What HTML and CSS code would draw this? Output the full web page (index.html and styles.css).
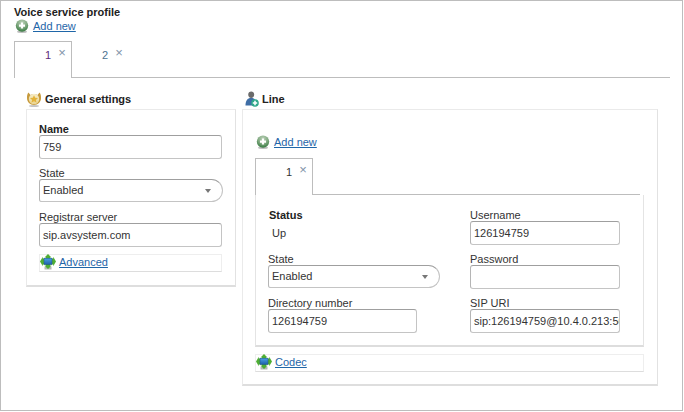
FILE: index.html
```html
<!DOCTYPE html>
<html lang="en">
<head>
<meta charset="utf-8">
<title>Voice service profile</title>
<link rel="stylesheet" href="styles.css">
</head>
<body>
<svg class="defs" width="0" height="0" aria-hidden="true">
  <defs>
    <radialGradient id="gplus" cx="50%" cy="25%" r="75%"><stop offset="0" stop-color="#b9cfb6"/><stop offset=".55" stop-color="#7fa87f"/><stop offset="1" stop-color="#34793f"/></radialGradient>
    <linearGradient id="gscreen" x1="0" y1="0" x2="0" y2="1"><stop offset="0" stop-color="#4aa3e8"/><stop offset="1" stop-color="#1f5fa8"/></linearGradient>
    <linearGradient id="gmedal" x1="0" y1="0" x2="0" y2="1"><stop offset="0" stop-color="#f7eecb"/><stop offset="1" stop-color="#e9d490"/></linearGradient>
    <symbol id="plus" viewBox="0 0 14 14">
      <ellipse cx="7" cy="12.7" rx="5" ry="1.2" fill="#bdbdbd"/>
      <circle cx="7" cy="6.6" r="6.2" fill="url(#gplus)"/>
      <path d="M7 3.6v6M4 6.6h6" stroke="#fff" stroke-width="2.2"/>
    </symbol>
    <symbol id="net" viewBox="0 0 16 16">
      <rect x="4.500" y="12.500" width="7" height="3" fill="#b4b8b4"/>
      <path d="M8 0l3.500 3.400H10v1h3.200V2.800L16 7.500l-2.800 4.700v-1.700H10v1h1.500L8 15l-3.500-3.500H6v-1H2.800v1.700L0 7.500l2.800-4.700v1.600H6v-1H4.500z" fill="#4fae34"/>
      <rect x="4" y="4.200" width="8" height="6.300" fill="url(#gscreen)" stroke="#1c5290" stroke-width=".5"/>
    </symbol>
  </defs>
</svg>
<main class="frame">
  <h1 class="title">Voice service profile</h1>
  <div class="add add-top">
    <svg class="add-icon"><use href="#plus"/></svg>
    <a href="#">Add new</a>
  </div>
  <div class="tabs tabs-top">
    <div class="tab active"><span class="num visited">1</span><span class="x">×</span></div>
    <div class="tab"><span class="num blue">2</span><span class="x">×</span></div>
  </div>
  <div class="columns">
    <section class="col-left">
      <h2 class="heading">
        <svg class="head-icon" viewBox="0 0 14 16">
          <ellipse cx="7" cy="15" rx="5" ry="1" fill="#c4c4c4"/>
          <path d="M1.400 1.500C.2 3 0 4.500 0 7c0 4 3 7 7 7s7-3 7-7c0-2.500-.2-4-1.400-5.500L10.500 4C9.500 3.300 8.300 3 7 3s-2.500.3-3.500 1z" fill="#c79a3c"/>
          <circle cx="7" cy="8" r="5.200" fill="url(#gmedal)"/>
          <path d="M7 4.200l1.200 2.500 2.800.3-2.100 1.900.6 2.700L7 10.300l-2.500 1.300.6-2.700L3 7l2.800-.3z" fill="#e3b23a"/>
        </svg>
        General settings
      </h2>
      <div class="panel panel-left">
        <div class="field"><label class="bold">Name</label><div class="input wide">759</div></div>
        <div class="field field-select"><label>State</label><div class="select wide-select">Enabled<i class="caret"></i></div></div>
        <div class="field"><label>Registrar server</label><div class="input wide">sip.avsystem.com</div></div>
        <div class="expander expander-left">
          <svg class="net"><use href="#net"/></svg><a href="#">Advanced</a>
        </div>
      </div>
    </section>
    <section class="col-right">
      <h2 class="heading heading-line">
        <svg class="head-icon" viewBox="0 0 14 16">
          <path d="M3.200 3.600C3.200 1.600 4.500.5 6.200.5s3 1.100 3 3.100-1.300 3.400-3 3.400-3-1.400-3-3.400z" fill="#6b6b6b"/>
          <path d="M.5 14.500C.5 9.500 2.500 7 6 7s5 2 5 5v2.500z" fill="#3f6ea6"/>
          <circle cx="10" cy="12" r="3.800" fill="#2fa88a"/>
          <path d="M10 9.800v4.400M7.800 12h4.400" stroke="#fff" stroke-width="1.500"/>
        </svg>
        Line
      </h2>
      <div class="panel panel-right">
        <div class="add add-line">
          <svg class="add-icon"><use href="#plus"/></svg>
          <a href="#">Add new</a>
        </div>
        <div class="tabs tabs-line">
          <div class="tab active"><span class="num">1</span><span class="x">×</span></div>
        </div>
        <div class="line-body">
          <div class="line-col">
            <div class="status"><label class="bold">Status</label><div class="status-value">Up</div></div>
            <div class="field field-select"><label>State</label><div class="select line-select">Enabled<i class="caret"></i></div></div>
            <div class="field"><label>Directory number</label><div class="input line-input">126194759</div></div>
          </div>
          <div class="line-col line-col-right">
            <div class="field"><label>Username</label><div class="input line-input">126194759</div></div>
            <div class="field"><label>Password</label><div class="input line-input"></div></div>
            <div class="field"><label>SIP URI</label><div class="input line-input clip">sip:126194759@10.4.0.213:5060</div></div>
          </div>
        </div>
        <div class="expander expander-line">
          <svg class="net"><use href="#net"/></svg><a href="#">Codec</a>
        </div>
      </div>
    </section>
  </div>
</main>
</body>
</html>
```
FILE: styles.css
```css
* { box-sizing: border-box; }
html, body { margin: 0; padding: 0; background: #fff; }
body { font: 11px/13px "Liberation Sans", Arial, sans-serif; color: #333; }
.defs { position: absolute; }
a { color: #1f66a8; text-decoration: underline; }

.frame {
  width: 683px; height: 411px;
  border: 1px solid #bdbdbd;
  padding: 5px 12px 0 13px;
  overflow: hidden;
}
.title { margin: 0; font-size: 11px; line-height: 13px; font-weight: bold; color: #222; }

.add { display: flex; align-items: center; height: 14px; font-size: 11px; }
.add a { margin-left: 4px; }
.add-icon { width: 14px; height: 14px; }
.add-top { margin-left: 1px; }

.tabs { display: flex; height: 37px; border-bottom: 1px solid #bdbdbd; }
.tabs-top { margin-top: 8px; width: 656px; }
.tab { position: relative; width: 58px; height: 37px; font-size: 11px; padding-left: 30px; padding-top: 6px; }
.tab.active { background: #fff; border: 1px solid #bdbdbd; border-bottom: 0; height: 37px; }
.tab + .tab { padding-left: 30px; padding-top: 7px; }
.num { color: #333; }
.num.visited { color: #5d2a7a; }
.num.blue { color: #4d7391; }
.x { color: #7f94a8; font-size: 13px; margin-left: 7px; position: relative; top: -2px; }

.columns { display: flex; margin-top: 10px; margin-left: 12px; }
.col-left { width: 210px; }
.col-right { width: 416px; margin-left: 6px; }
.heading { display: flex; align-items: center; height: 21px; margin: 0; padding-top: 1px; font-size: 11px; font-weight: bold; color: #222; }
.head-icon { width: 14px; height: 16px; margin: 0 4px 0 1px; flex: none; }
.heading-line { padding-left: 2px; }
.heading-line .head-icon { margin-right: 3px; }

.panel { border: 1px solid #eaeaea; border-right-color: #e2e2e2; border-bottom: 2px solid #dedede; }
.panel-left { height: 178px; padding: 12px 13px 0 12px; }
.panel-right { height: 277px; padding: 25px 13px 0 12px; }

.field { margin-bottom: 7px; }
.field-select { margin-bottom: 8px; }
.field label { display: block; height: 13px; padding-top: 1px; line-height: 13px; color: #333; }
label.bold { font-weight: bold; color: #222; }

.input, .select {
  height: 24px; line-height: 22px;
  border: 1px solid #c4c4c4; border-top-color: #9f9f9f; border-left-color: #b5b5b5;
  border-radius: 3px;
  padding: 0 3px;
  color: #333; background: #fff;
  white-space: nowrap; overflow: hidden;
}
.wide { width: 183px; }
.select { position: relative; height: 23px; line-height: 21px; border-radius: 3px 12px 12px 3px; padding-left: 3px; }
.wide-select { width: 184px; }
.line-select { width: 172px; }
.caret { position: absolute; right: 11px; top: 9px; border: 3.5px solid transparent; border-top: 4px solid #777; border-bottom: 0; width: 0; height: 0; }

.expander { display: flex; align-items: center; height: 18px; border: 1px solid #eee; border-bottom: 1px solid #ddd; padding-bottom: 2px; }
.expander-left { width: 183px; }
.expander-line { width: 389px; margin-top: 7px; }
.net { width: 16px; height: 16px; margin-right: 3px; flex: none; }

.add-line { margin-left: 1px; }
.tabs-line { margin-top: 9px; width: 385px; }

.line-body { display: flex; height: 152px; border: 1px solid #e4e4e4; border-bottom: 2px solid #ddd; border-top: 0; padding: 13px 0 0 12px; }
.line-col { width: 202px; flex: none; }
.status { height: 44px; }
.status label { display: block; padding: 1px 0 0 1px; }
.status-value { padding: 5px 0 0 4px; }
.line-col .line-input { width: 149px; }
.line-col-right .line-input { width: 150px; }
.clip { padding-right: 0; }
```
